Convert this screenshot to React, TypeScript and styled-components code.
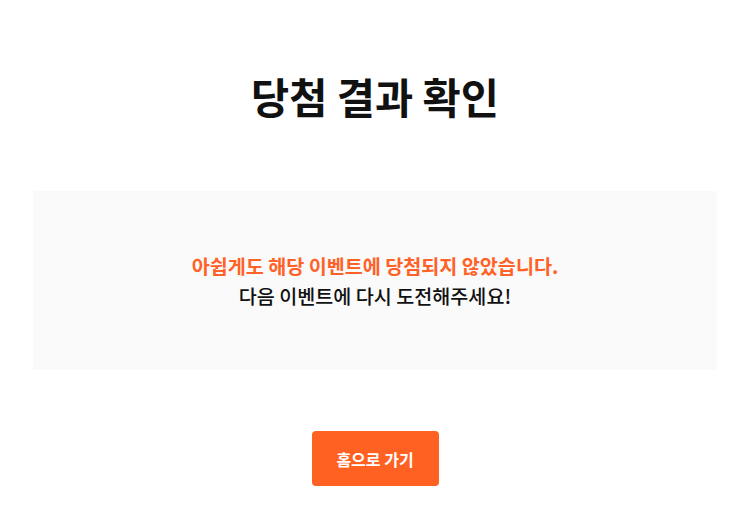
import styled, {createGlobalStyle} from 'styled-components';

const GlobalStyle = createGlobalStyle`
	html, body {
		margin: 0;
		padding: 0;
		background: #ffffff;
	}
	body {
		font-family: 'Noto Sans CJK KR', 'Noto Sans', sans-serif;
		color: #111111;
	}
`;

const ResultPage = () => {
	return (
		<>
			<GlobalStyle />
			<PageStyles>
				<h1 className="result__title">당첨 결과 확인</h1>
				<section className="result__box">
					<p className="result__box__fail">아쉽게도 해당 이벤트에 당첨되지 않았습니다.</p>
					<p className="result__box__retry">다음 이벤트에 다시 도전해주세요!</p>
				</section>
				<HomeButton type="button">홈으로 가기</HomeButton>
			</PageStyles>
		</>
	);
};

const PageStyles = styled.main`
	display: flex;
	flex-direction: column;
	align-items: center;
	padding: 71px 36px 0 33px;
	& .result__title {
		margin: 0;
		font-size: 41.5px;
		line-height: 50px;
		font-weight: 700;
		color: #111111;
	}
	& .result__box {
		display: flex;
		flex-direction: column;
		align-items: center;
		justify-content: center;
		align-self: stretch;
		height: 179px;
		margin-top: 70px;
		background-color: #fafafa;
		&__fail,
		&__retry {
			margin: 0;
			font-size: 19.6px;
			line-height: 30px;
			font-weight: 500;
		}
		&__fail {
			color: #ff6127;
			font-weight: 600;
		}
		&__retry {
			color: #111111;
		}
	}
`;

const HomeButton = styled.button`
	width: 127px;
	height: 55px;
	margin-top: 61px;
	border: none;
	border-radius: 4px;
	background-color: #ff6122;
	color: #ffffff;
	font-family: 'Noto Sans CJK KR', 'Noto Sans', sans-serif;
	font-size: 16px;
	font-weight: 700;
	cursor: pointer;
`;

export default ResultPage;
